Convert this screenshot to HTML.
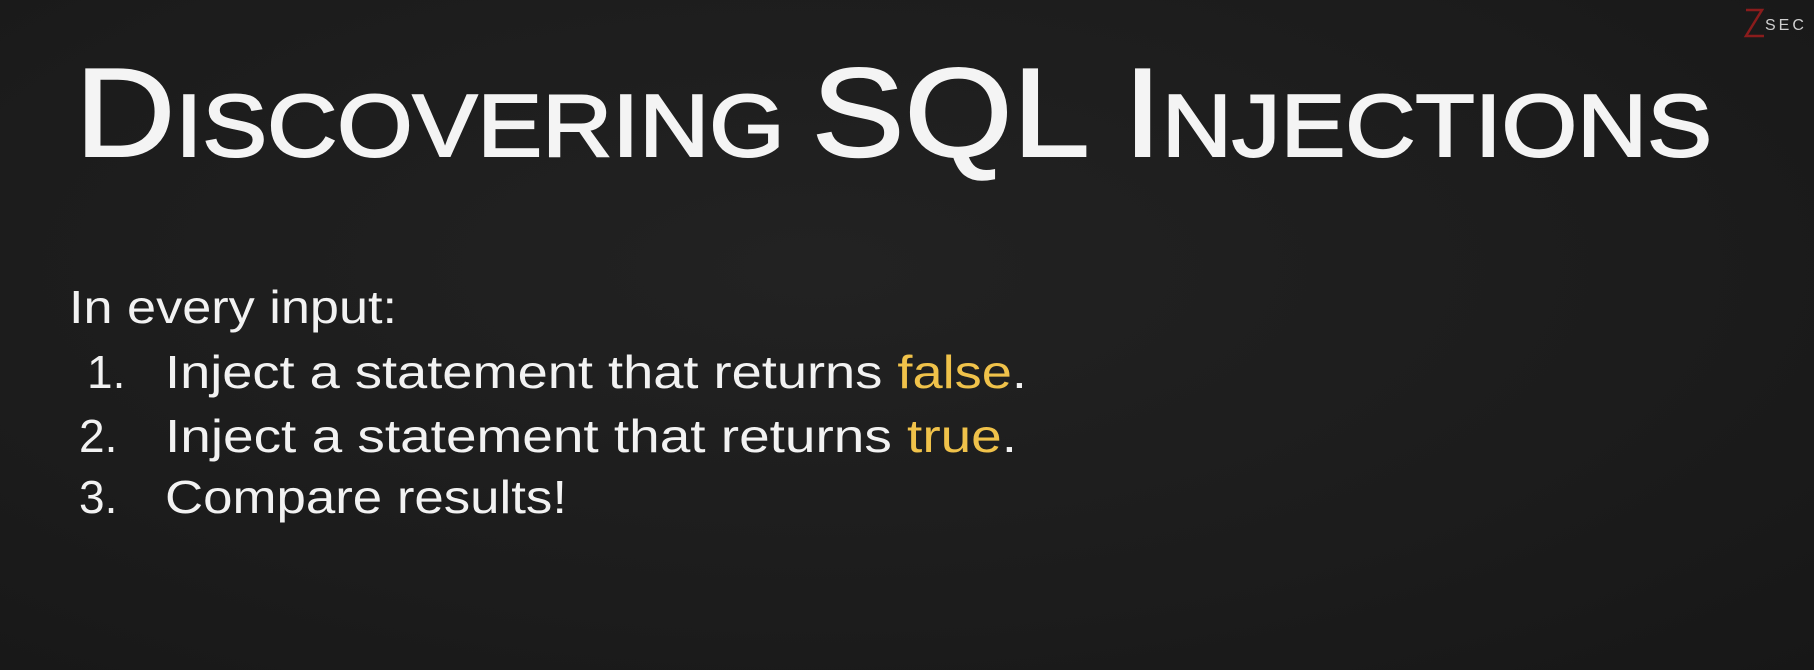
<!DOCTYPE html>
<html><head><meta charset="utf-8"><style>
html,body{margin:0;padding:0;background:#1c1c1c;}
body{width:1814px;height:670px;overflow:hidden;background:radial-gradient(ellipse at 45% 40%,#222 0%,#1c1c1c 60%,#171717 100%);}
svg{display:block}
</style></head><body>
<svg width="1814" height="670" xmlns="http://www.w3.org/2000/svg" font-family="Liberation Sans, sans-serif">
<g fill="#f4f4f4" stroke="#f4f4f4" stroke-width="2">
<text x="75" y="156" font-size="126" textLength="1637" lengthAdjust="spacingAndGlyphs"><tspan>D</tspan><tspan font-size="88">ISCOVERING </tspan><tspan>SQL I</tspan><tspan font-size="88">NJECTIONS</tspan></text>
</g>
<g fill="#f2f2f2" font-size="46">
<text x="69" y="323" textLength="328" lengthAdjust="spacingAndGlyphs">In every input:</text>
<text x="87" y="388">1.</text>
<text x="165" y="388" textLength="862" lengthAdjust="spacingAndGlyphs">Inject a statement that returns <tspan fill="#f0c24a">false</tspan>.</text>
<text x="79" y="452">2.</text>
<text x="165" y="452" textLength="852" lengthAdjust="spacingAndGlyphs">Inject a statement that returns <tspan fill="#f0c24a">true</tspan>.</text>
<text x="79" y="513">3.</text>
<text x="165" y="513" textLength="402" lengthAdjust="spacingAndGlyphs">Compare results!</text>
</g>
<path d="M1746 10 L1762 10 L1746 36 L1764 36" stroke="#8a1c1c" stroke-width="2.5" fill="none"/>
<text x="1765" y="30" font-size="16" fill="#cfcfcf" letter-spacing="3" font-family="Liberation Sans, sans-serif">SEC</text>
</svg>
</body></html>
